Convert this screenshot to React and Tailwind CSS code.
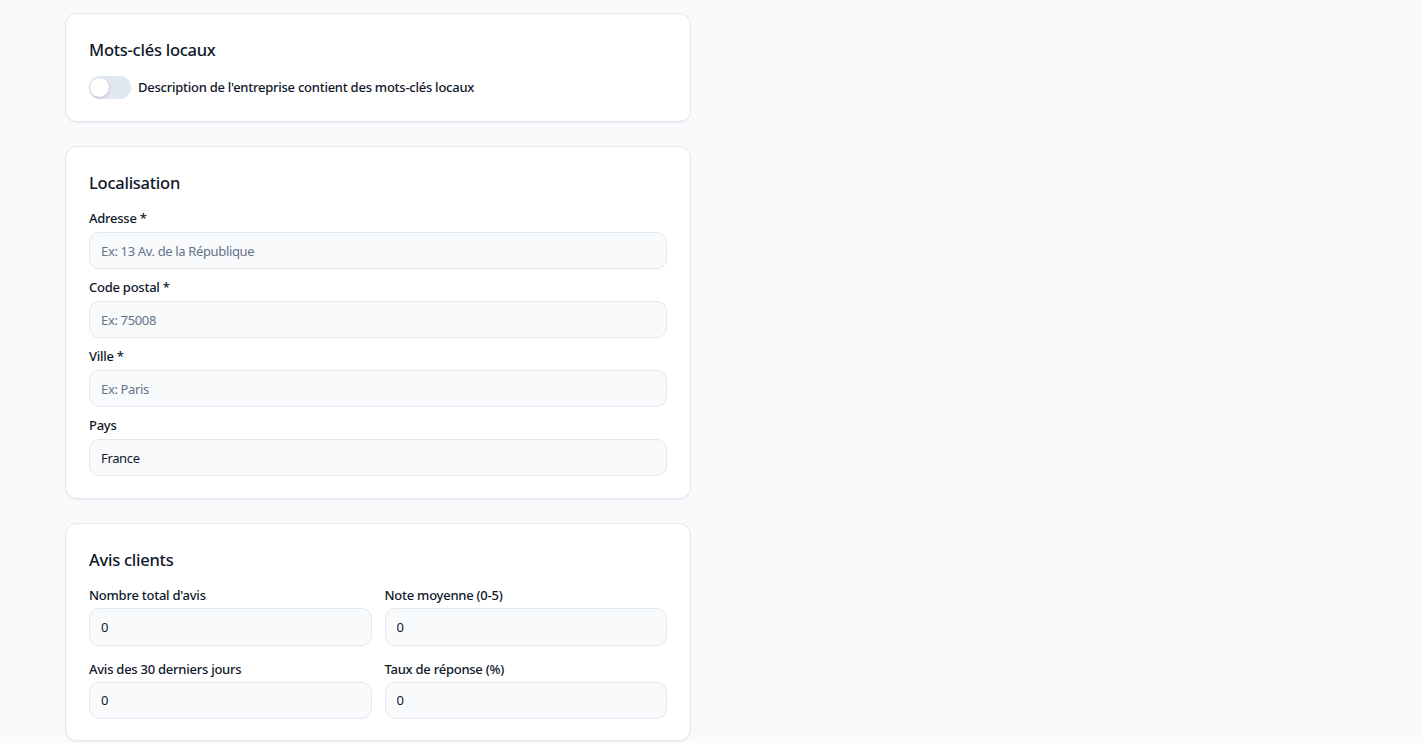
import React from "react";

const font = { fontFamily: '"Noto Sans", "Open Sans", Arial, sans-serif' };

function Card({ title, children, pb = "pb-[22px]" }) {
  return (
    <div className={`w-[626px] rounded-xl border border-[#e2e8f0] bg-white px-[23px] pt-6 shadow-[0_1px_2px_rgba(15,23,42,0.05)] ${pb}`}>
      <h2 className="mb-[13px] text-[16.5px] leading-6 font-medium tracking-[-0.25px] text-[#0f172a]">{title}</h2>
      {children}
    </div>
  );
}

function Field({ label, placeholder, value, mb = "mb-1", h = "h-[37px]" }) {
  return (
    <div className="flex flex-col">
      <label className={`text-[13px] leading-5 font-medium tracking-[-0.25px] text-[#0f172a] ${mb}`}>{label}</label>
      <input
        readOnly
        value={value ?? ""}
        placeholder={placeholder}
        className={`w-full rounded-[10px] border border-[#e2e8f0] bg-[#f8fafc] px-[11px] text-[13px] tracking-[-0.35px] text-[#0f172a] placeholder:text-[#64748b] outline-none ${h}`}
        style={font}
      />
    </div>
  );
}

export default function App() {
  return (
    <div className="min-h-[743px] bg-[#f8fafc] pt-[13px] pl-[65px]" style={font}>
      <div className="flex flex-col gap-6">
        <Card title="Mots-clés locaux" pb="pb-[22px]">
          <div className="mt-px flex h-6 items-center gap-[7px]">
            <div className="relative h-[23px] w-[42px] rounded-full bg-[#e2e8f0]">
              <div className="absolute top-[2px] left-[1px] h-[19px] w-[19px] rounded-full bg-white shadow-[0_1px_3px_rgba(0,0,0,0.2)]"></div>
            </div>
            <span className="text-[13px] leading-5 font-medium tracking-[-0.25px] text-[#0f172a]">
              Description de l'entreprise contient des mots-clés locaux
            </span>
          </div>
        </Card>

        <Card title="Localisation">
          <div className="flex flex-col gap-2">
            <Field label="Adresse *" placeholder="Ex: 13 Av. de la République" />
            <Field label="Code postal *" placeholder="Ex: 75008" />
            <Field label="Ville *" placeholder="Ex: Paris" />
            <Field label="Pays" value="France" />
          </div>
        </Card>

        <Card title="Avis clients" pb="pb-[21px]">
          <div className="grid grid-cols-2 gap-x-[13px] gap-y-[13px]">
            <Field label="Nombre total d'avis" value="0" mb="mb-[3px]" h="h-[37.5px]" />
            <Field label="Note moyenne (0-5)" value="0" mb="mb-[3px]" h="h-[37.5px]" />
            <Field label="Avis des 30 derniers jours" value="0" mb="mb-[3px]" h="h-[37.5px]" />
            <Field label="Taux de réponse (%)" value="0" mb="mb-[3px]" h="h-[37.5px]" />
          </div>
        </Card>
      </div>
    </div>
  );
}
